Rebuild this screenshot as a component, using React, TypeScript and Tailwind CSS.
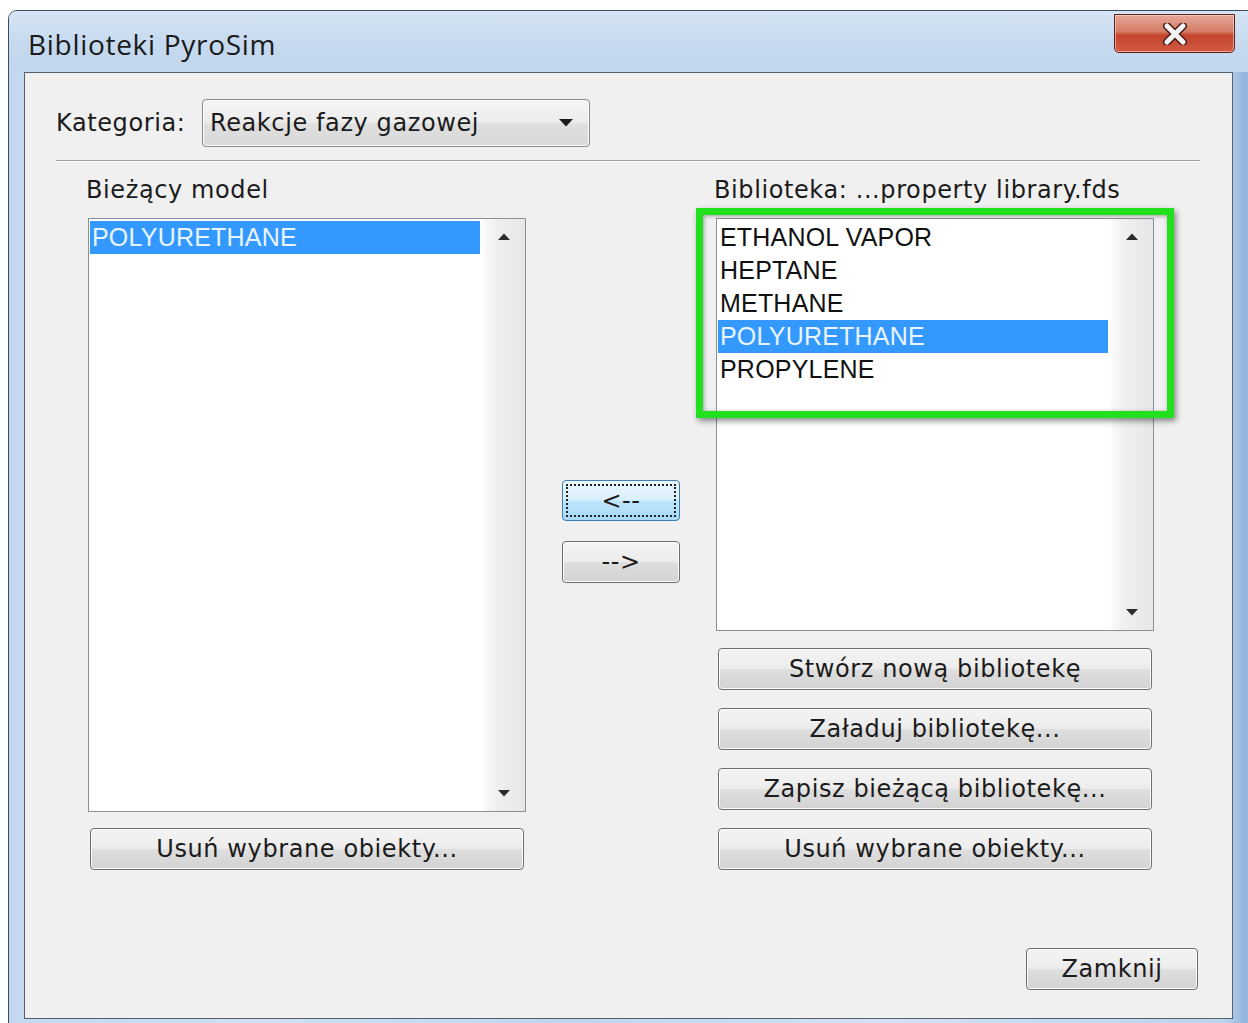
import React from "react";

const ui = { fontFamily: '"DejaVu Sans", Verdana, sans-serif', letterSpacing: "0.6px" };
const listFont = { fontFamily: '"Liberation Sans", Arial, sans-serif' };

function Arrow({ dir }: { dir: "up" | "down" }) {
  return (
    <svg width="12" height="7" viewBox="0 0 12 7" className="block">
      {dir === "up" ? (
        <path d="M0 7 L6 0.5 L12 7 Z" fill="#2b2b2b" />
      ) : (
        <path d="M0 0 L12 0 L6 6.5 Z" fill="#2b2b2b" />
      )}
    </svg>
  );
}

function ScrollBar() {
  return (
    <div className="w-[42px] h-full flex flex-col items-center justify-between py-[14px] bg-[linear-gradient(90deg,#fbfbfb_0%,#f0f0f0_30%,#e6e6e6_100%)]">
      <Arrow dir="up" />
      <Arrow dir="down" />
    </div>
  );
}

function ListBox({
  items,
  selected,
  height,
}: {
  items: string[];
  selected: string;
  height: string;
}) {
  return (
    <div
      className={`w-[438px] ${height} border border-[#8b9097] bg-white flex`}
      style={listFont}
    >
      <div className="flex-1 pt-[2px] pl-[1px] pr-[3px]">
        {items.map((it) => (
          <div
            key={it}
            className={
              it === selected
                ? "h-[33px] leading-[33px] pl-[2px] text-[25px] tracking-[0.2px] bg-[#3399ff] text-[#eaf4ff]"
                : "h-[33px] leading-[33px] pl-[2px] text-[25px] tracking-[0.2px] text-[#111]"
            }
          >
            {it}
          </div>
        ))}
      </div>
      <ScrollBar />
    </div>
  );
}

function Button({
  label,
  className = "",
}: {
  label: string;
  className?: string;
}) {
  return (
    <div
      className={`h-[42px] rounded-[4px] border border-[#6f6f6f] flex items-center justify-center text-[24px] text-[#1b1b1b] bg-[linear-gradient(180deg,#f4f4f4_0%,#ececec_48%,#dedede_52%,#d3d3d3_100%)] shadow-[inset_0_0_0_1px_#fbfbfb] ${className}`}
      style={ui}
    >
      {label}
    </div>
  );
}

export default function App() {
  return (
    <div className="w-[1248px] h-[1023px] bg-white overflow-hidden">
      <div className="ml-[8px] mt-[10px] w-[1256px] h-[1020px] rounded-t-[9px] border border-[#3f4b59] bg-[linear-gradient(90deg,#c3d8ef_0%,#cfe0f2_20%,#c0d6ee_45%,#d2e2f3_70%,#bdd3ec_97%,#94b6dc_98.5%,#a9c5e6_100%)] flex flex-col">
        {/* title bar */}
        <div className="h-[61px] flex items-start relative bg-[linear-gradient(180deg,#d6e5f5_0%,#c4d8ee_60%,#c2d7ee_100%)] rounded-t-[8px]">
          <div
            className="pl-[19px] pt-[12px] text-[28px] tracking-[0.7px] text-[#1a1a1a]"
            style={{ fontFamily: '"Open Sans", "Noto Sans", sans-serif' }}
          >
            Biblioteki PyroSim
          </div>
          <div className="ml-[auto] mr-[28px] mt-[3px] w-[121px] h-[39px] rounded-b-[5px] border border-[#5c2219] bg-[linear-gradient(180deg,#e6a89a_0%,#d47a64_45%,#c4442e_55%,#d15a42_100%)] shadow-[inset_0_0_0_1px_rgba(255,220,210,0.6)] flex items-center justify-center">
            <svg width="28" height="22" viewBox="0 0 28 22">
              <path
                d="M6 3 L22 19 M22 3 L6 19"
                stroke="#4a1c14"
                strokeWidth="8"
                strokeLinecap="round"
              />
              <path
                d="M6 3 L22 19 M22 3 L6 19"
                stroke="#f4f4f4"
                strokeWidth="5"
                strokeLinecap="round"
              />
            </svg>
          </div>
        </div>

        {/* client area */}
        <div className="ml-[15px] w-[1209px] h-[947px] border border-[#56606c] bg-[#f0f0f0] flex flex-col">
          {/* category row */}
          <div className="mt-[26px] pl-[31px] flex items-center h-[48px]">
            <div className="w-[146px] text-[24px] text-[#1b1b1b]" style={ui}>
              Kategoria:
            </div>
            <div
              className="w-[388px] h-[48px] rounded-[4px] border border-[#8a8a8a] bg-[linear-gradient(180deg,#f5f5f5_0%,#ececec_48%,#e0e0e0_52%,#d8d8d8_100%)] shadow-[inset_0_0_0_1px_#fafafa] flex items-center pl-[7px] pr-[16px]"
              style={ui}
            >
              <span className="text-[24px] text-[#1b1b1b] flex-1">
                Reakcje fazy gazowej
              </span>
              <svg width="14" height="8" viewBox="0 0 14 8">
                <path d="M0 0 L14 0 L7 7.5 Z" fill="#1b1b1b" />
              </svg>
            </div>
          </div>

          {/* separator */}
          <div className="mt-[13px] ml-[31px] w-[1144px] h-[1px] bg-[#a0a0a0]" />
          <div className="ml-[31px] w-[1144px] h-[1px] bg-white" />

          {/* list columns */}
          <div className="mt-[13px] pl-[63px] flex">
            <div className="w-[438px] flex flex-col">
              <div
                className="-ml-[2px] h-[30px] leading-[30px] text-[24px] text-[#1b1b1b]"
                style={ui}
              >
                Bieżący model
              </div>
              <div className="mt-[13px]">
                <ListBox
                  items={["POLYURETHANE"]}
                  selected="POLYURETHANE"
                  height="h-[594px]"
                />
              </div>
              <Button
                label="Usuń wybrane obiekty..."
                className="mt-[16px] ml-[2px] w-[434px]"
              />
            </div>

            <div className="ml-[36px] w-[118px] flex flex-col pt-[305px] gap-[20px]">
              <div className="h-[41px] rounded-[4px] border border-[#3c7fb1] bg-[linear-gradient(180deg,#eaf6fd_0%,#d9f0fc_48%,#bee6fd_52%,#a7d9f5_100%)] p-[3px]">
                <div
                  className="w-full h-full border-2 border-dotted border-[#222] flex items-center justify-center text-[24px] text-[#1b1b1b]"
                  style={ui}
                >
                  &lt;--
                </div>
              </div>
              <Button label="-->" className="w-[118px]" />
            </div>

            <div className="ml-[36px] w-[438px] flex flex-col relative">
              <div
                className="-ml-[2px] h-[30px] leading-[30px] text-[24px] text-[#1b1b1b] whitespace-nowrap"
                style={ui}
              >
                Biblioteka: ...property library.fds
              </div>
              <div className="mt-[13px]">
                <ListBox
                  items={[
                    "ETHANOL VAPOR",
                    "HEPTANE",
                    "METHANE",
                    "POLYURETHANE",
                    "PROPYLENE",
                  ]}
                  selected="POLYURETHANE"
                  height="h-[413px]"
                />
              </div>
              <div className="mt-[17px] ml-[2px] w-[434px] flex flex-col gap-[18px]">
                <Button label="Stwórz nową bibliotekę" />
                <Button label="Załaduj bibliotekę..." />
                <Button label="Zapisz bieżącą bibliotekę..." />
                <Button label="Usuń wybrane obiekty..." />
              </div>
              {/* highlight frame around the library items */}
              <div className="absolute left-[-20px] top-[33px] w-[478px] h-[210px] border-[7px] border-[#22e01e] shadow-[2px_3px_6px_rgba(0,0,0,0.45),inset_1px_1px_4px_rgba(0,0,0,0.35)] pointer-events-none" />
            </div>
          </div>

          {/* bottom row */}
          <div className="mt-[78px] flex justify-end pr-[34px]">
            <Button label="Zamknij" className="w-[172px]" />
          </div>
        </div>
      </div>
    </div>
  );
}
